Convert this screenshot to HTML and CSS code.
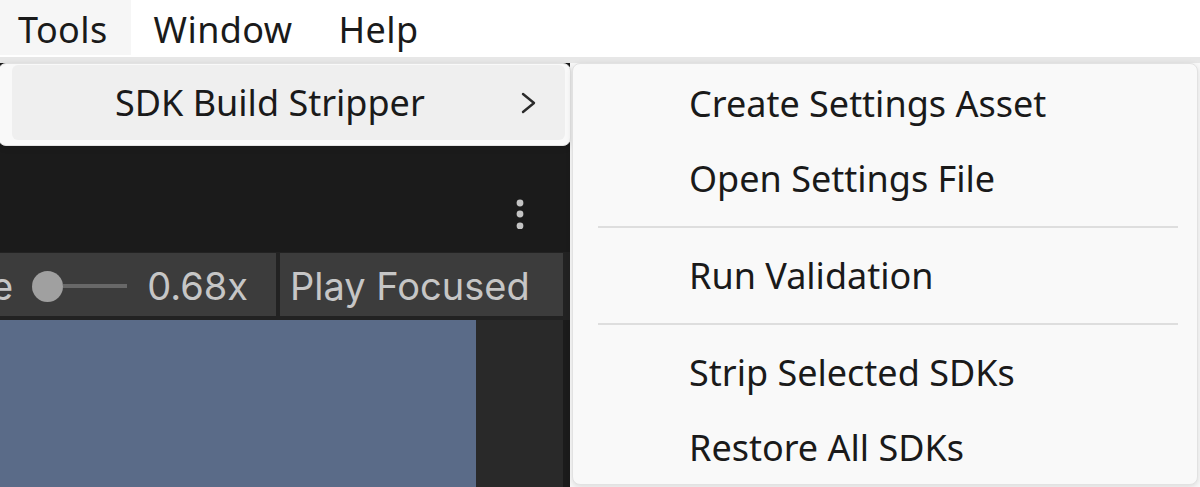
FILE: index.html
```html
<!DOCTYPE html>
<html lang="en">

<head>
    <meta charset="UTF-8">
    <meta name="viewport" content="width=device-width, initial-scale=1.0">
    <title>Tools Menu</title>
    <link rel="stylesheet" href="styles.css">
</head>

<body>

    <header class="menubar">
        <span class="menubar-item is-open">Tools</span>
        <span class="menubar-item">Window</span>
        <span class="menubar-item">Help</span>
    </header>

    <main class="workspace">
        <!-- game view behind the open menus -->
        <section class="game-view">
            <div class="game-view-header">
                <svg class="kebab" width="8" height="30" viewBox="0 0 8 30">
                    <circle cx="4" cy="4" r="3.4" fill="#c4c4c4" />
                    <circle cx="4" cy="15" r="3.4" fill="#c4c4c4" />
                    <circle cx="4" cy="27" r="3.4" fill="#c4c4c4" />
                </svg>
            </div>

            <div class="game-toolbar">
                <div class="toolbar-group scale-group">
                    <span class="scale-label">Scale</span>
                    <span class="scale-slider">
                        <span class="slider-knob"></span>
                        <span class="slider-track"></span>
                    </span>
                    <span class="scale-value">0.68x</span>
                </div>
                <div class="toolbar-group play-group">Play Focused</div>
            </div>

            <div class="game-view-body">
                <div class="viewport"></div>
                <div class="side-panel"></div>
            </div>
        </section>

        <nav class="menu tools-menu">
            <div class="menu-item has-submenu is-hover">
                <span>SDK Build Stripper</span>
                <svg class="chevron" width="16" height="22" viewBox="0 0 16 22">
                    <path d="M2 2 L13 11 L2 20" fill="none" stroke="#2b2b2b" stroke-width="2.4"
                        stroke-linecap="round" stroke-linejoin="round" />
                </svg>
            </div>
        </nav>

        <nav class="menu submenu">
            <div class="menu-item">Create Settings Asset</div>
            <div class="menu-item">Open Settings File</div>
            <div class="menu-separator"></div>
            <div class="menu-item">Run Validation</div>
            <div class="menu-separator"></div>
            <div class="menu-item">Strip Selected SDKs</div>
            <div class="menu-item">Restore All SDKs</div>
        </nav>
    </main>

</body>

</html>
```

FILE: styles.css
```css
body {
    margin: 0;
    height: 487px;
    overflow: hidden;
    background-color: #f9f9f9;
    font-family: "Noto Sans", "Open Sans", sans-serif;
    color: #1a1a1a;
}

/* top menu bar */
.menubar {
    display: flex;
    height: 57px;
    background-color: #ffffff;
    border-bottom: 6px solid #e7e7e7;
}

.menubar-item {
    height: 50px;
    padding: 5px 23px 0;
    line-height: 50px;
    font-size: 36px;
    letter-spacing: 0.4px;
}

.menubar-item:first-child {
    padding-left: 18px;
}

.menubar-item.is-open {
    background-color: #f6f6f6;
}

/* workspace */
.workspace {
    position: relative;
    height: 424px;
}

.game-view {
    display: flex;
    flex-direction: column;
    width: 570px;
    height: 100%;
    background-color: #1b1b1b;
    font-family: Inter, "Noto Sans", sans-serif;
}

.game-view-header {
    display: flex;
    justify-content: flex-end;
    align-items: flex-end;
    height: 189px;
    padding: 0 46px 23px 0;
    box-sizing: border-box;
}

.game-toolbar {
    display: flex;
    gap: 4px;
    height: 68px;
    padding: 1px 7px 4px 0;
    box-sizing: border-box;
    background-color: #222222;
}

.toolbar-group {
    display: flex;
    align-items: center;
    overflow: hidden;
    background-color: #3c3c3c;
    color: #c6c6c6;
    font-size: 38px;
    padding-top: 3px;
    box-sizing: border-box;
}

.scale-group {
    width: 276px;
}

.scale-label {
    margin-left: -86px;
}

.scale-slider {
    display: flex;
    align-items: center;
    margin: 0 20px 0 19px;
}

.slider-knob {
    width: 31px;
    height: 31px;
    border-radius: 50%;
    background-color: #a0a0a0;
}

.slider-track {
    width: 64px;
    height: 4px;
    background-color: #686868;
}

.play-group {
    flex: 1;
    padding-left: 10px;
}

.game-view-body {
    display: flex;
    flex: 1;
}

.viewport {
    width: 476px;
    background-color: #5a6b88;
}

.side-panel {
    flex: 1;
    background-color: #292929;
    border-right: 7px solid #1b1b1b;
}

/* popup menus */
.menu {
    position: absolute;
    top: 0;
    box-sizing: border-box;
    background-color: #f9f9f9;
    border: 1px solid #e2e2e2;
    border-radius: 8px;
    box-shadow: 0 2px 6px rgba(0, 0, 0, 0.12);
}

.tools-menu {
    left: -2px;
    width: 573px;
    height: 83px;
    padding: 1px 5px 0 13px;
}

.submenu {
    left: 572px;
    width: 626px;
    height: 422px;
    padding: 2px 4px 0;
}

.menu-item {
    height: 75px;
    line-height: 75px;
    font-size: 36px;
    padding-left: 112px;
    border-radius: 6px;
}

.tools-menu .menu-item {
    padding-left: 103px;
}

.menu-item.has-submenu {
    display: flex;
    justify-content: space-between;
    align-items: center;
}

.menu-item.is-hover {
    background-color: #efefef;
}

.chevron {
    margin-right: 28px;
}

.menu-separator {
    height: 2px;
    margin: 10px 15px 10px 21px;
    background-color: #dedede;
}
```
